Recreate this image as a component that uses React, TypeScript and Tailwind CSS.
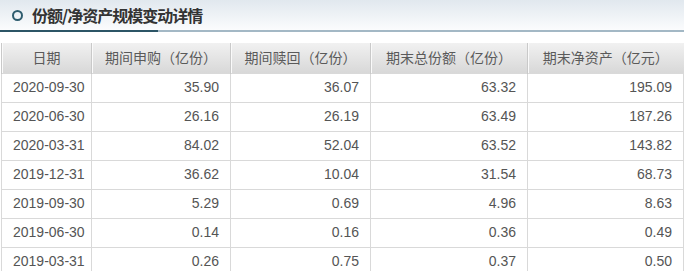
const rows = [
  ["2020-09-30", "35.90", "36.07", "63.32", "195.09"],
  ["2020-06-30", "26.16", "26.19", "63.49", "187.26"],
  ["2020-03-31", "84.02", "52.04", "63.52", "143.82"],
  ["2019-12-31", "36.62", "10.04", "31.54", "68.73"],
  ["2019-09-30", "5.29", "0.69", "4.96", "8.63"],
  ["2019-06-30", "0.14", "0.16", "0.36", "0.49"],
  ["2019-03-31", "0.26", "0.75", "0.37", "0.50"],
];

const heads = ["日期", "期间申购（亿份）", "期间赎回（亿份）", "期末总份额（亿份）", "期末净资产（亿元）"];
const widths = ["w-[90px]", "w-[139px]", "w-[140px]", "w-[157px]", "w-[156px]"];

export default function App() {
  return (
    <div className="w-[684px] h-[271px] overflow-hidden bg-white font-['Liberation_Sans','Noto_Sans_CJK_SC',sans-serif]">
      {/* title bar */}
      <div className="h-[30px] flex items-center pl-[12px] bg-gradient-to-b from-[#e1e8ee] to-[#fbfcfd]">
        <span className="w-[11px] h-[11px] rounded-full border-[2.5px] border-[#2e5c6e]" />
        <span className="ml-[9px] text-[16px] font-bold text-[#333] font-['Noto_Sans_CJK_SC',sans-serif] tracking-[-1px]">
          份额/净资产规模变动详情
        </span>
      </div>
      <div className="flex h-[2px]">
        <div className="w-[158px] bg-[#2c5566]" />
        <div className="flex-1 bg-[#a3b8c5]" />
      </div>

      <table className="mt-[11px] ml-px border-collapse table-fixed text-[14px] text-[#555]">
        <thead>
          <tr className="h-[30px] bg-gradient-to-b from-[#f1f1f1] to-[#d8d8d8]">
            {heads.map((h, i) => (
              <th
                key={h}
                className={`${widths[i]} p-0 font-normal text-center font-['Noto_Sans_CJK_SC',sans-serif] text-[#5a5a5a] border-l border-[#c9c9c9] shadow-[inset_1px_0_0_#fafafa]`}
              >
                {h}
              </th>
            ))}
          </tr>
        </thead>
        <tbody>
          {rows.map((r) => (
            <tr key={r[0]} className="h-[29px]">
              {r.map((c, i) => (
                <td
                  key={i}
                  className={`p-0 border border-[#d9d9d9] ${i === 0 ? "text-left pl-[11px]" : "text-right pr-[11px]"}`}
                >
                  {c}
                </td>
              ))}
            </tr>
          ))}
        </tbody>
      </table>
    </div>
  );
}
